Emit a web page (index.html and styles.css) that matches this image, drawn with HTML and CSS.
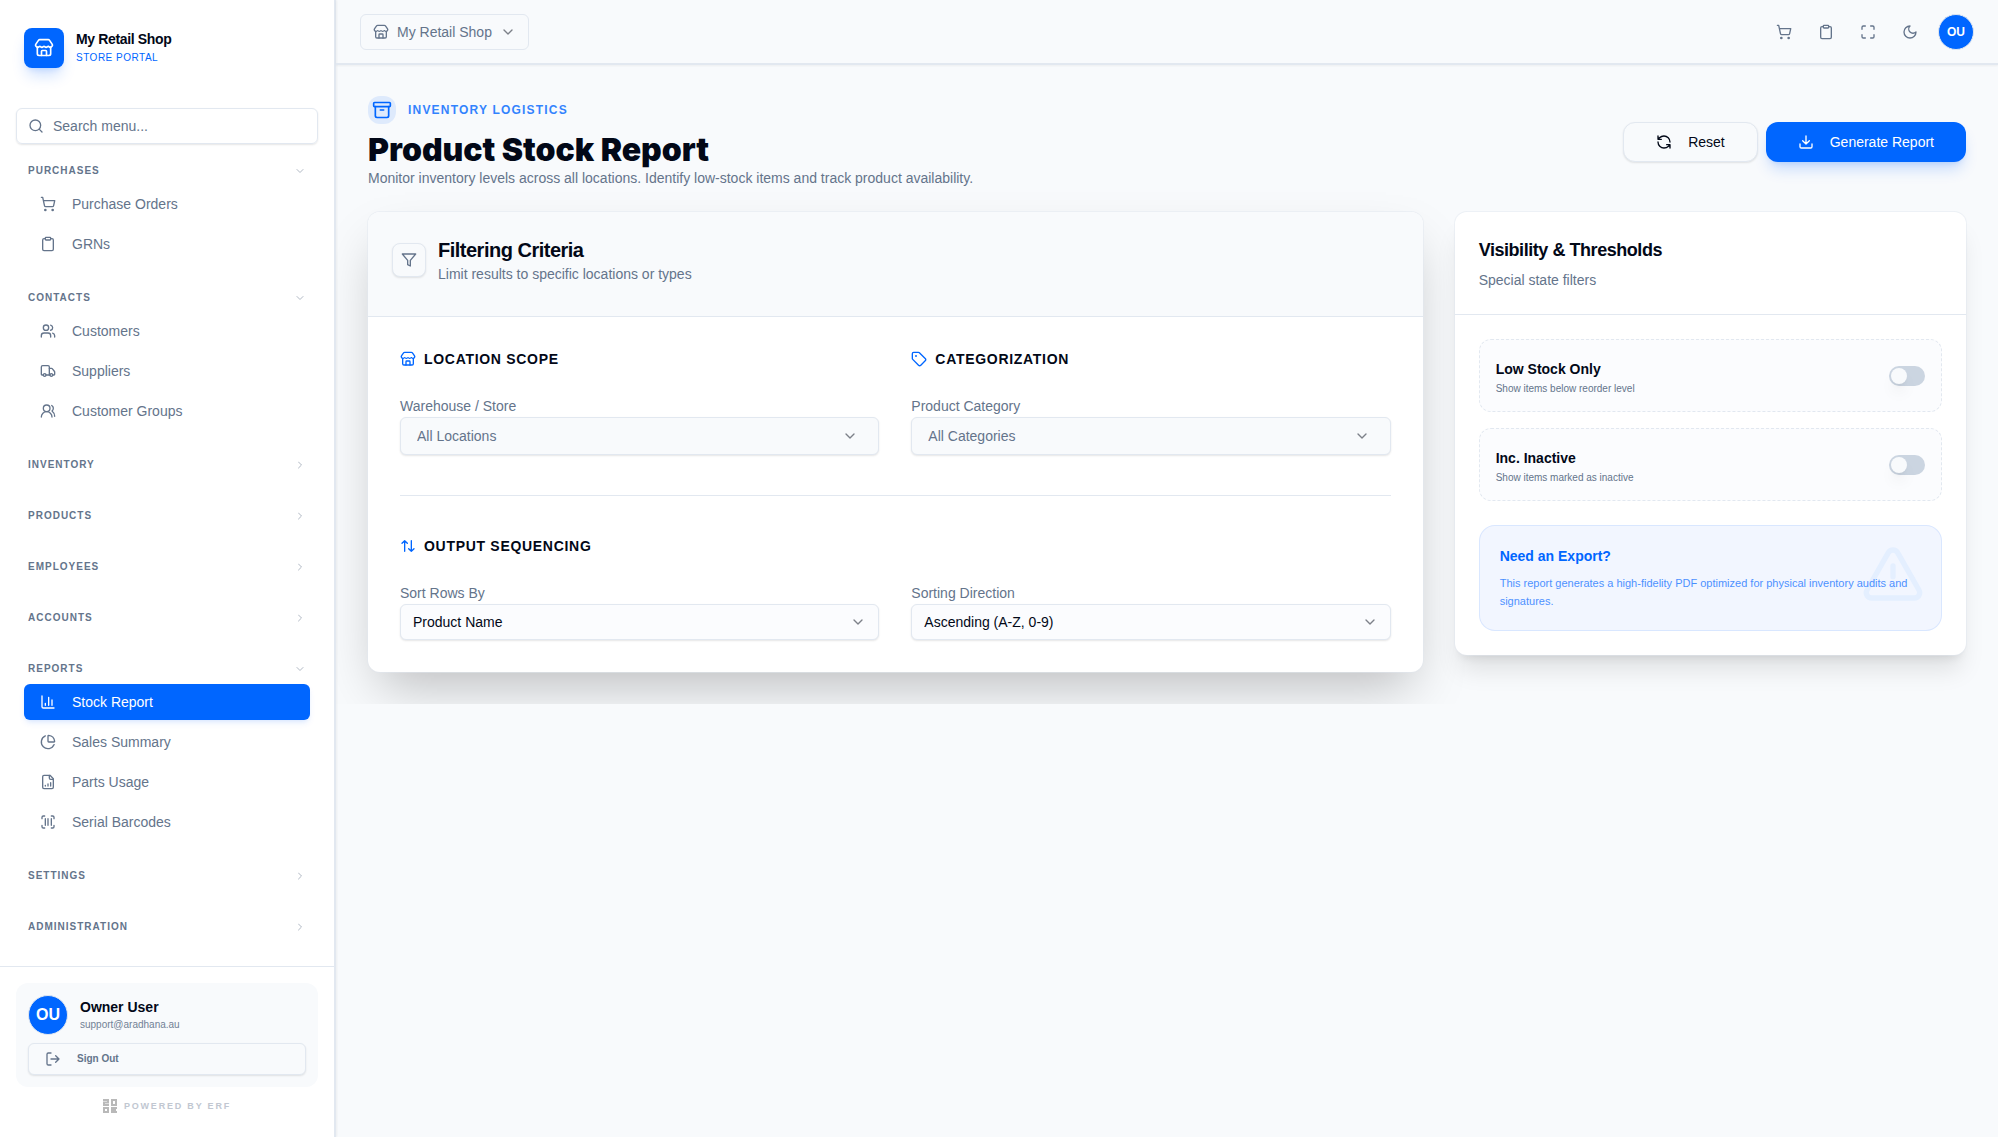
FILE: index.html
```html
<!DOCTYPE html>
<html lang="en">
  <head>
    <meta charset="UTF-8" />
    <meta name="viewport" content="width=device-width, initial-scale=1.0" />
    <title>Product Stock Report</title>
    <link rel="stylesheet" href="styles.css">
  </head>
  <body>
    <svg class="sprite" aria-hidden="true">
      <symbol id="i-store" viewBox="0 0 24 24">
        <path d="M15 21v-5a1 1 0 0 0-1-1h-4a1 1 0 0 0-1 1v5" />
        <path d="M17.774 10.31a1.12 1.12 0 0 0-1.549 0 2.5 2.5 0 0 1-3.451 0 1.12 1.12 0 0 0-1.548 0 2.5 2.5 0 0 1-3.452 0 1.12 1.12 0 0 0-1.549 0 2.5 2.5 0 0 1-3.77-3.248l2.889-4.184A2 2 0 0 1 7 2h10a2 2 0 0 1 1.653.873l2.895 4.192a2.5 2.5 0 0 1-3.774 3.244" />
        <path d="M4 10.95V19a2 2 0 0 0 2 2h12a2 2 0 0 0 2-2v-8.05" />
      </symbol>
      <symbol id="i-search" viewBox="0 0 24 24">
        <circle cx="11" cy="11" r="8" />
        <path d="m21 21-4.3-4.3" />
      </symbol>
      <symbol id="i-down" viewBox="0 0 24 24"><path d="m6 9 6 6 6-6" /></symbol>
      <symbol id="i-right" viewBox="0 0 24 24"><path d="m9 18 6-6-6-6" /></symbol>
      <symbol id="i-cart" viewBox="0 0 24 24">
        <circle cx="8" cy="21" r="1" />
        <circle cx="19" cy="21" r="1" />
        <path d="M2.05 2.05h2l2.66 12.42a2 2 0 0 0 2 1.58h9.78a2 2 0 0 0 1.95-1.57l1.65-7.43H5.12" />
      </symbol>
      <symbol id="i-clipboard" viewBox="0 0 24 24">
        <rect width="8" height="4" x="8" y="2" rx="1" />
        <path d="M16 4h2a2 2 0 0 1 2 2v14a2 2 0 0 1-2 2H6a2 2 0 0 1-2-2V6a2 2 0 0 1 2-2h2" />
      </symbol>
      <symbol id="i-users" viewBox="0 0 24 24">
        <path d="M16 21v-2a4 4 0 0 0-4-4H6a4 4 0 0 0-4 4v2" />
        <circle cx="9" cy="7" r="4" />
        <path d="M22 21v-2a4 4 0 0 0-3-3.87M16 3.13a4 4 0 0 1 0 7.75" />
      </symbol>
      <symbol id="i-truck" viewBox="0 0 24 24">
        <path d="M14 18V6a2 2 0 0 0-2-2H4a2 2 0 0 0-2 2v11a1 1 0 0 0 1 1h2" />
        <path d="M15 18H9" />
        <path d="M19 18h2a1 1 0 0 0 1-1v-3.65a1 1 0 0 0-.22-.624l-3.48-4.35A1 1 0 0 0 17.52 8H14" />
        <circle cx="17" cy="18" r="2" />
        <circle cx="7" cy="18" r="2" />
      </symbol>
      <symbol id="i-groups" viewBox="0 0 24 24">
        <path d="M18 21a8 8 0 0 0-16 0" />
        <circle cx="10" cy="8" r="5" />
        <path d="M22 20c0-3.37-2-6.5-4-8a5 5 0 0 0-.45-8.3" />
      </symbol>
      <symbol id="i-chart" viewBox="0 0 24 24">
        <path d="M3 3v16a2 2 0 0 0 2 2h16M18 17V9M13 17V5M8 17v-3" />
      </symbol>
      <symbol id="i-pie" viewBox="0 0 24 24">
        <path d="M21 12c.552 0 1.005-.449.95-.998a10 10 0 0 0-8.953-8.951c-.55-.055-.998.398-.998.95v8a1 1 0 0 0 1 1z" />
        <path d="M21.21 15.89A10 10 0 1 1 8 2.83" />
      </symbol>
      <symbol id="i-file" viewBox="0 0 24 24">
        <path d="M15 2H6a2 2 0 0 0-2 2v16a2 2 0 0 0 2 2h12a2 2 0 0 0 2-2V7Z" />
        <path d="M14 2v4a2 2 0 0 0 2 2h4M8 18v-1M12 18v-3M16 18v-5" />
      </symbol>
      <symbol id="i-barcode" viewBox="0 0 24 24">
        <path d="M3 7V5a2 2 0 0 1 2-2h2M17 3h2a2 2 0 0 1 2 2v2M21 17v2a2 2 0 0 1-2 2h-2M7 21H5a2 2 0 0 1-2-2v-2" />
        <path d="M8 7v10M12 7v10M17 7v10" />
      </symbol>
      <symbol id="i-logout" viewBox="0 0 24 24">
        <path d="M9 21H5a2 2 0 0 1-2-2V5a2 2 0 0 1 2-2h4M16 17l5-5-5-5M21 12H9" />
      </symbol>
      <symbol id="i-maximize" viewBox="0 0 24 24">
        <path d="M8 3H5a2 2 0 0 0-2 2v3M21 8V5a2 2 0 0 0-2-2h-3M3 16v3a2 2 0 0 0 2 2h3M16 21h3a2 2 0 0 0 2-2v-3" />
      </symbol>
      <symbol id="i-moon" viewBox="0 0 24 24">
        <path d="M12 3a6 6 0 0 0 9 9 9 9 0 1 1-9-9Z" />
      </symbol>
      <symbol id="i-archive" viewBox="0 0 24 24">
        <rect width="20" height="5" x="2" y="3" rx="1" />
        <path d="M4 8v11a2 2 0 0 0 2 2h12a2 2 0 0 0 2-2V8M10 12h4" />
      </symbol>
      <symbol id="i-refresh" viewBox="0 0 24 24">
        <path d="M21 12a9 9 0 0 0-9-9 9.75 9.75 0 0 0-6.74 2.74L3 8M3 3v5h5" />
        <path d="M3 12a9 9 0 0 0 9 9 9.75 9.75 0 0 0 6.74-2.74L21 16M16 16h5v5" />
      </symbol>
      <symbol id="i-download" viewBox="0 0 24 24">
        <path d="M21 15v4a2 2 0 0 1-2 2H5a2 2 0 0 1-2-2v-4M7 10l5 5 5-5M12 15V3" />
      </symbol>
      <symbol id="i-filter" viewBox="0 0 24 24">
        <path d="M22 3H2l8 9.46V19l4 2v-8.54z" />
      </symbol>
      <symbol id="i-tag" viewBox="0 0 24 24">
        <path d="M12.586 2.586A2 2 0 0 0 11.172 2H4a2 2 0 0 0-2 2v7.172a2 2 0 0 0 .586 1.414l8.704 8.704a2.426 2.426 0 0 0 3.42 0l6.58-6.58a2.426 2.426 0 0 0 0-3.42z" />
        <circle cx="7.5" cy="7.5" r=".5" fill="currentColor" />
      </symbol>
      <symbol id="i-sort" viewBox="0 0 24 24">
        <path d="m21 16-4 4-4-4M17 20V4M3 8l4-4 4 4M7 4v16" />
      </symbol>
      <symbol id="i-alert" viewBox="0 0 24 24">
        <path d="m21.73 18-8-14a2 2 0 0 0-3.48 0l-8 14A2 2 0 0 0 4 21h16a2 2 0 0 0 1.73-3M12 9v4M12 17h.01" />
      </symbol>
    </svg>

    <div class="app">
      <aside class="sidebar">
        <div class="brand">
          <span class="brand-logo"><svg class="icon icon-md"><use href="#i-store" /></svg></span>
          <div>
            <div class="brand-name">My Retail Shop</div>
            <div class="brand-sub">STORE PORTAL</div>
          </div>
        </div>

        <label class="search">
          <svg class="icon"><use href="#i-search" /></svg>
          <input type="text" placeholder="Search menu..." aria-label="Search menu" />
        </label>

        <nav class="nav">
          <section>
            <button class="nav-head" type="button">PURCHASES <svg class="icon icon-sm"><use href="#i-down" /></svg></button>
            <div class="nav-items">
              <a class="nav-item" href="#"><svg class="icon"><use href="#i-cart" /></svg>Purchase Orders</a>
              <a class="nav-item" href="#"><svg class="icon"><use href="#i-clipboard" /></svg>GRNs</a>
            </div>
          </section>
          <section>
            <button class="nav-head" type="button">CONTACTS <svg class="icon icon-sm"><use href="#i-down" /></svg></button>
            <div class="nav-items">
              <a class="nav-item" href="#"><svg class="icon"><use href="#i-users" /></svg>Customers</a>
              <a class="nav-item" href="#"><svg class="icon"><use href="#i-truck" /></svg>Suppliers</a>
              <a class="nav-item" href="#"><svg class="icon"><use href="#i-groups" /></svg>Customer Groups</a>
            </div>
          </section>
          <section>
            <button class="nav-head" type="button">INVENTORY <svg class="icon icon-sm"><use href="#i-right" /></svg></button>
          </section>
          <section>
            <button class="nav-head" type="button">PRODUCTS <svg class="icon icon-sm"><use href="#i-right" /></svg></button>
          </section>
          <section>
            <button class="nav-head" type="button">EMPLOYEES <svg class="icon icon-sm"><use href="#i-right" /></svg></button>
          </section>
          <section>
            <button class="nav-head" type="button">ACCOUNTS <svg class="icon icon-sm"><use href="#i-right" /></svg></button>
          </section>
          <section>
            <button class="nav-head" type="button">REPORTS <svg class="icon icon-sm"><use href="#i-down" /></svg></button>
            <div class="nav-items">
              <a class="nav-item active" href="#"><svg class="icon"><use href="#i-chart" /></svg>Stock Report</a>
              <a class="nav-item" href="#"><svg class="icon"><use href="#i-pie" /></svg>Sales Summary</a>
              <a class="nav-item" href="#"><svg class="icon"><use href="#i-file" /></svg>Parts Usage</a>
              <a class="nav-item" href="#"><svg class="icon"><use href="#i-barcode" /></svg>Serial Barcodes</a>
            </div>
          </section>
          <section>
            <button class="nav-head" type="button">SETTINGS <svg class="icon icon-sm"><use href="#i-right" /></svg></button>
          </section>
          <section>
            <button class="nav-head" type="button">ADMINISTRATION <svg class="icon icon-sm"><use href="#i-right" /></svg></button>
          </section>
        </nav>

        <div class="sidebar-footer">
          <div class="user-box">
            <div class="user">
              <span class="avatar avatar-lg">OU</span>
              <div>
                <div class="user-name">Owner User</div>
                <div class="user-email">support@aradhana.au</div>
              </div>
            </div>
            <button class="sign-out" type="button"><svg class="icon"><use href="#i-logout" /></svg>Sign Out</button>
          </div>
          <div class="powered">
            <svg class="powered-logo" viewBox="0 0 14 14">
              <path d="M0 1h5v2.5H1V6h5M8 1h5v5H9V0M1 8v5h4V9H0M14 9H9v4h5M9 11h4" />
            </svg>
            POWERED BY ERF
          </div>
        </div>
      </aside>

      <div class="main">
        <header class="topbar">
          <button class="shop-button" type="button">
            <svg class="icon"><use href="#i-store" /></svg>
            My Retail Shop
            <svg class="icon chevron"><use href="#i-down" /></svg>
          </button>
          <div class="topbar-actions">
            <button class="icon-button" type="button" aria-label="Cart"><svg class="icon"><use href="#i-cart" /></svg></button>
            <button class="icon-button" type="button" aria-label="Orders"><svg class="icon"><use href="#i-clipboard" /></svg></button>
            <button class="icon-button" type="button" aria-label="Full screen"><svg class="icon"><use href="#i-maximize" /></svg></button>
            <button class="icon-button" type="button" aria-label="Dark mode"><svg class="icon"><use href="#i-moon" /></svg></button>
            <button class="avatar" type="button">OU</button>
          </div>
        </header>

        <main class="content">
          <div class="page-head">
            <div>
              <div class="eyebrow">
                <span class="eyebrow-icon"><svg class="icon icon-md"><use href="#i-archive" /></svg></span>
                <span class="eyebrow-text">INVENTORY LOGISTICS</span>
              </div>
              <h1 class="page-title">Product Stock Report</h1>
              <p class="page-sub">Monitor inventory levels across all locations. Identify low-stock items and track product availability.</p>
            </div>
            <div class="page-actions">
              <button class="btn btn-outline" type="reset" form="reportForm"><svg class="icon"><use href="#i-refresh" /></svg>Reset</button>
              <button class="btn btn-primary" type="submit" form="reportForm"><svg class="icon"><use href="#i-download" /></svg>Generate Report</button>
            </div>
          </div>

          <form class="report-grid" id="reportForm">
            <div class="card card-filters">
              <div class="card-head filters-head">
                <span class="filter-icon"><svg class="icon"><use href="#i-filter" /></svg></span>
                <div>
                  <h2 class="filters-title">Filtering Criteria</h2>
                  <p class="card-sub">Limit results to specific locations or types</p>
                </div>
              </div>
              <div class="filters-body">
                <div class="field-row">
                  <div>
                    <h3 class="group-title"><svg class="icon"><use href="#i-store" /></svg>LOCATION SCOPE</h3>
                    <label class="field-label" for="location">Warehouse / Store</label>
                    <div class="select-wrap">
                      <select class="select select-muted" id="location"><option>All Locations</option></select>
                      <svg class="icon chevron"><use href="#i-down" /></svg>
                    </div>
                  </div>
                  <div>
                    <h3 class="group-title"><svg class="icon"><use href="#i-tag" /></svg>CATEGORIZATION</h3>
                    <label class="field-label" for="category">Product Category</label>
                    <div class="select-wrap">
                      <select class="select select-muted" id="category"><option>All Categories</option></select>
                      <svg class="icon chevron"><use href="#i-down" /></svg>
                    </div>
                  </div>
                </div>
                <hr class="divider" />
                <h3 class="group-title"><svg class="icon"><use href="#i-sort" /></svg>OUTPUT SEQUENCING</h3>
                <div class="field-row">
                  <div>
                    <label class="field-label" for="sortBy">Sort Rows By</label>
                    <div class="select-wrap">
                      <select class="select" id="sortBy"><option>Product Name</option></select>
                      <svg class="icon chevron"><use href="#i-down" /></svg>
                    </div>
                  </div>
                  <div>
                    <label class="field-label" for="sortDir">Sorting Direction</label>
                    <div class="select-wrap">
                      <select class="select" id="sortDir"><option>Ascending (A-Z, 0-9)</option></select>
                      <svg class="icon chevron"><use href="#i-down" /></svg>
                    </div>
                  </div>
                </div>
              </div>
            </div>

            <div class="card card-visibility">
              <div class="card-head visibility-head">
                <h2 class="visibility-title">Visibility &amp; Thresholds</h2>
                <p class="card-sub">Special state filters</p>
              </div>
              <div class="visibility-body">
                <div class="toggles">
                  <label class="toggle-row" for="lowStock">
                    <span>
                      <span class="toggle-title">Low Stock Only</span>
                      <span class="toggle-sub">Show items below reorder level</span>
                    </span>
                    <input class="switch" type="checkbox" id="lowStock" />
                  </label>
                  <label class="toggle-row" for="inactive">
                    <span>
                      <span class="toggle-title">Inc. Inactive</span>
                      <span class="toggle-sub">Show items marked as inactive</span>
                    </span>
                    <input class="switch" type="checkbox" id="inactive" />
                  </label>
                </div>
                <div class="export-note">
                  <svg class="icon note-icon"><use href="#i-alert" /></svg>
                  <h4 class="note-title">Need an Export?</h4>
                  <p class="note-text">This report generates a high-fidelity PDF optimized for physical inventory audits and signatures.</p>
                </div>
              </div>
            </div>
          </form>
        </main>
      </div>
    </div>
  </body>
</html>
```

FILE: styles.css
```css
:root {
  --primary: #0066ff;
  --text: #020817;
  --muted: #64748b;
  --border: #e2e8f0;
  --bg: #f8fafc;
  --shadow-sm: 0 1px 2px rgba(0, 0, 0, 0.1);
}

* {
  box-sizing: border-box;
}

body,
h1,
h2,
h3,
h4,
p {
  margin: 0;
}

body {
  font-family: "Liberation Sans", Arial, sans-serif;
  font-size: 14px;
  line-height: 20px;
  color: var(--text);
  background-color: var(--bg);
}

button,
input,
select {
  font: inherit;
  color: inherit;
}

button {
  cursor: pointer;
}

.sprite {
  display: none;
}

.icon {
  width: 16px;
  height: 16px;
  flex-shrink: 0;
  fill: none;
  stroke: currentColor;
  stroke-width: 2;
  stroke-linecap: round;
  stroke-linejoin: round;
}

.icon-sm {
  width: 12px;
  height: 12px;
}

.icon-md {
  width: 20px;
  height: 20px;
}

.chevron {
  color: var(--text);
  opacity: 0.5;
}

.app {
  display: flex;
  min-height: 100vh;
}

/* Sidebar */

.sidebar {
  width: 336px;
  height: 100vh;
  flex-shrink: 0;
  display: flex;
  flex-direction: column;
  background-color: #ffffff;
  border-right: 2px solid var(--border);
  box-shadow: 1px 0 2px rgba(0, 0, 0, 0.05);
}

.brand {
  display: flex;
  align-items: center;
  gap: 12px;
  padding: 28px 24px 40px;
}

.brand-logo {
  display: flex;
  align-items: center;
  justify-content: center;
  width: 40px;
  height: 40px;
  border-radius: 8px;
  color: #ffffff;
  background-color: var(--primary);
  box-shadow: 0 10px 15px -3px rgba(0, 102, 255, 0.2),
    0 4px 6px -4px rgba(0, 102, 255, 0.2);
}

.brand-name {
  font-weight: 700;
  letter-spacing: -0.025em;
}

.brand-sub {
  font-size: 10px;
  line-height: 18px;
  letter-spacing: 0.05em;
  color: var(--primary);
}

.search {
  display: flex;
  align-items: center;
  gap: 9px;
  height: 36px;
  margin: 0 16px;
  padding: 0 11px;
  color: var(--muted);
  border: 1px solid var(--border);
  border-radius: 6px;
  box-shadow: var(--shadow-sm);
}

.search input {
  flex: 1;
  min-width: 0;
  padding: 0;
  border: none;
  outline: none;
  background: none;
}

.search input::placeholder {
  color: var(--muted);
  opacity: 1;
}

.nav {
  flex: 1;
  min-height: 0;
  overflow: hidden;
  display: flex;
  flex-direction: column;
  gap: 20px;
  padding: 11px 24px 0;
}

.nav-head {
  display: flex;
  align-items: center;
  justify-content: space-between;
  width: 100%;
  height: 31px;
  padding: 0 4px;
  border: none;
  background: none;
  font-size: 10px;
  font-weight: 700;
  letter-spacing: 1px;
  color: var(--muted);
}

.nav-head .icon {
  opacity: 0.5;
}

.nav-items {
  display: flex;
  flex-direction: column;
  gap: 4px;
}

.nav-item {
  display: flex;
  align-items: center;
  gap: 16px;
  height: 36px;
  padding: 0 16px;
  border-radius: 6px;
  color: var(--muted);
  text-decoration: none;
}

.nav-item.active {
  color: #ffffff;
  background-color: var(--primary);
  box-shadow: 0 4px 6px -1px rgba(0, 102, 255, 0.1),
    0 2px 4px -2px rgba(0, 102, 255, 0.1);
}

.sidebar-footer {
  padding: 16px 16px 0;
  border-top: 1px solid var(--border);
}

.user-box {
  padding: 12px;
  border-radius: 12px;
  background-color: var(--bg);
}

.user {
  display: flex;
  align-items: center;
  gap: 12px;
  margin-bottom: 8px;
}

.avatar {
  display: flex;
  align-items: center;
  justify-content: center;
  width: 36px;
  height: 36px;
  padding: 0;
  border: 1px solid var(--border);
  border-radius: 50%;
  font-size: 12px;
  font-weight: 700;
  color: #ffffff;
  background-color: var(--primary);
}

.avatar-lg {
  width: 40px;
  height: 40px;
  font-size: 16px;
}

.user-name {
  font-weight: 700;
}

.user-email {
  font-size: 10px;
  line-height: 16px;
  color: var(--muted);
  opacity: 0.9;
}

.sign-out {
  display: flex;
  align-items: center;
  gap: 16px;
  width: 100%;
  height: 32px;
  padding: 0 16px;
  border: 1px solid var(--border);
  border-radius: 6px;
  font-size: 10px;
  font-weight: 700;
  color: var(--muted);
  background-color: var(--bg);
  box-shadow: var(--shadow-sm);
}

.powered {
  display: flex;
  align-items: center;
  justify-content: center;
  gap: 7px;
  height: 50px;
  padding-bottom: 13px;
  font-size: 9px;
  font-weight: 700;
  letter-spacing: 0.2em;
  color: #c1c7d1;
}

.powered-logo {
  width: 14px;
  height: 14px;
  fill: none;
  stroke: #b9b9b9;
  stroke-width: 2;
}

/* Top bar */

.main {
  flex: 1;
  min-width: 0;
}

.topbar {
  display: flex;
  align-items: center;
  justify-content: space-between;
  height: 65px;
  padding: 0 24px;
  border-bottom: 2px solid var(--border);
  box-shadow: 0 1px 2px rgba(0, 0, 0, 0.05);
}

.shop-button {
  display: flex;
  align-items: center;
  gap: 8px;
  height: 36px;
  padding: 0 12px;
  border: 1px solid var(--border);
  border-radius: 6px;
  color: var(--muted);
  background-color: var(--bg);
}

.topbar-actions {
  display: flex;
  align-items: center;
  gap: 6px;
}

.icon-button {
  display: flex;
  align-items: center;
  justify-content: center;
  width: 36px;
  height: 36px;
  padding: 0;
  border: none;
  color: var(--muted);
  background: none;
}

.topbar-actions .avatar {
  margin-left: 4px;
}

/* Page */

.content {
  overflow: hidden;
  padding: 31px 32px 32px;
}

.page-head {
  display: flex;
  align-items: center;
  justify-content: space-between;
  margin-bottom: 24px;
}

.eyebrow {
  display: flex;
  align-items: center;
  gap: 12px;
  margin-bottom: 8px;
}

.eyebrow-icon {
  display: flex;
  align-items: center;
  justify-content: center;
  width: 28px;
  height: 28px;
  border-radius: 12px;
  color: var(--primary);
  background-color: rgba(0, 102, 255, 0.1);
}

.eyebrow-text {
  font-size: 12px;
  font-weight: 700;
  letter-spacing: 0.1em;
  color: var(--primary);
  opacity: 0.8;
}

.page-title {
  font-family: Inter, "Liberation Sans", sans-serif;
  font-size: 32px;
  font-weight: 900;
  line-height: 36px;
}

.page-sub {
  color: var(--muted);
}

.page-actions {
  display: flex;
  gap: 8px;
}

.btn {
  display: flex;
  align-items: center;
  gap: 16px;
  height: 40px;
  padding: 0 32px;
  border: none;
  border-radius: 12px;
}

.btn-outline {
  border: 1px solid var(--border);
  background-color: var(--bg);
  box-shadow: var(--shadow-sm);
}

.btn-primary {
  color: #ffffff;
  background-color: var(--primary);
  box-shadow: 0 10px 15px -3px rgba(0, 102, 255, 0.2),
    0 4px 6px -4px rgba(0, 102, 255, 0.2);
}

.report-grid {
  display: grid;
  grid-template-columns: repeat(3, minmax(0, 1fr));
  align-items: start;
  gap: 32px;
}

.card {
  border-radius: 12px;
  background-color: #ffffff;
}

.card-filters {
  grid-column: span 2;
  box-shadow: 0 0 0 1px rgba(226, 232, 240, 0.5),
    0 25px 50px -12px rgba(0, 0, 0, 0.25);
}

.card-visibility {
  box-shadow: 0 0 0 1px rgba(226, 232, 240, 0.5),
    0 20px 25px -5px rgba(0, 0, 0, 0.1), 0 8px 10px -6px rgba(0, 0, 0, 0.1);
}

.card-head {
  border-bottom: 1px solid var(--border);
}

.card-sub {
  color: var(--muted);
}

.filters-head {
  display: flex;
  align-items: center;
  gap: 12px;
  padding: 24px 24px 32px;
  border-radius: 12px 12px 0 0;
  background-color: var(--bg);
}

.filter-icon {
  display: flex;
  padding: 8px;
  border: 1px solid var(--border);
  border-radius: 8px;
  color: var(--muted);
  background-color: var(--bg);
  box-shadow: var(--shadow-sm);
}

.filters-title {
  font-size: 20px;
  line-height: 28px;
  letter-spacing: -0.025em;
}

.filters-body {
  padding: 32px;
}

.field-row {
  display: grid;
  grid-template-columns: repeat(2, minmax(0, 1fr));
  gap: 32px;
}

.group-title {
  display: flex;
  align-items: center;
  gap: 8px;
  margin-bottom: 26px;
  font-size: 14px;
  line-height: 20px;
  letter-spacing: 0.05em;
}

.group-title .icon {
  color: var(--primary);
}

.field-label {
  display: block;
  line-height: 22px;
  color: var(--muted);
}

.select-wrap {
  position: relative;
}

.select {
  display: block;
  appearance: none;
  width: 100%;
  height: 36px;
  padding: 0 36px 0 12px;
  border: 1px solid var(--border);
  border-radius: 6px;
  background-color: #fbfcfe;
  box-shadow: var(--shadow-sm);
}

.select-muted {
  height: 38px;
  padding: 0 44px 0 16px;
  color: var(--muted);
  background-color: var(--bg);
}

.select-wrap .chevron {
  position: absolute;
  top: calc(50% - 8px);
  right: 13px;
  pointer-events: none;
}

.select-muted + .chevron {
  right: 21px;
}

.divider {
  margin: 40px 0;
  border: none;
  border-top: 1px solid var(--border);
}

.visibility-head {
  padding: 24px;
}

.visibility-title {
  margin-bottom: 6px;
  font-size: 18px;
  line-height: 28px;
  letter-spacing: -0.025em;
}

.visibility-body {
  padding: 24px;
}

.toggles {
  display: flex;
  flex-direction: column;
  gap: 16px;
  margin-bottom: 24px;
}

.toggle-row {
  display: flex;
  align-items: center;
  justify-content: space-between;
  padding: 16px;
  border: 1px dashed var(--border);
  border-radius: 12px;
  background-color: #fbfcfe;
}

.toggle-title,
.toggle-sub {
  display: block;
}

.toggle-title {
  font-weight: 700;
  line-height: 26px;
}

.toggle-sub {
  font-size: 10px;
  line-height: 13px;
  color: var(--muted);
}

.switch {
  appearance: none;
  width: 36px;
  height: 20px;
  margin: 0;
  padding: 2px;
  border-radius: 10px;
  background-color: #cbd5e1;
  cursor: pointer;
}

.switch::before {
  content: "";
  display: block;
  width: 16px;
  height: 16px;
  border-radius: 50%;
  background-color: var(--bg);
  box-shadow: 0 10px 15px -3px rgba(0, 0, 0, 0.1),
    0 4px 6px -4px rgba(0, 0, 0, 0.1);
}

.switch:checked {
  background-color: var(--primary);
}

.switch:checked::before {
  margin-left: 16px;
}

.export-note {
  position: relative;
  padding: 20px;
  border: 1px solid rgba(0, 102, 255, 0.1);
  border-radius: 16px;
  background-color: #f2f6ff;
}

.note-icon {
  position: absolute;
  top: 16px;
  right: 16px;
  width: 64px;
  height: 64px;
  color: #e4efff;
}

.note-title {
  position: relative;
  margin-bottom: 8px;
  font-size: 14px;
  line-height: 20px;
  color: var(--primary);
}

.note-text {
  position: relative;
  font-size: 11px;
  line-height: 18px;
  color: var(--primary);
  opacity: 0.7;
}
```
